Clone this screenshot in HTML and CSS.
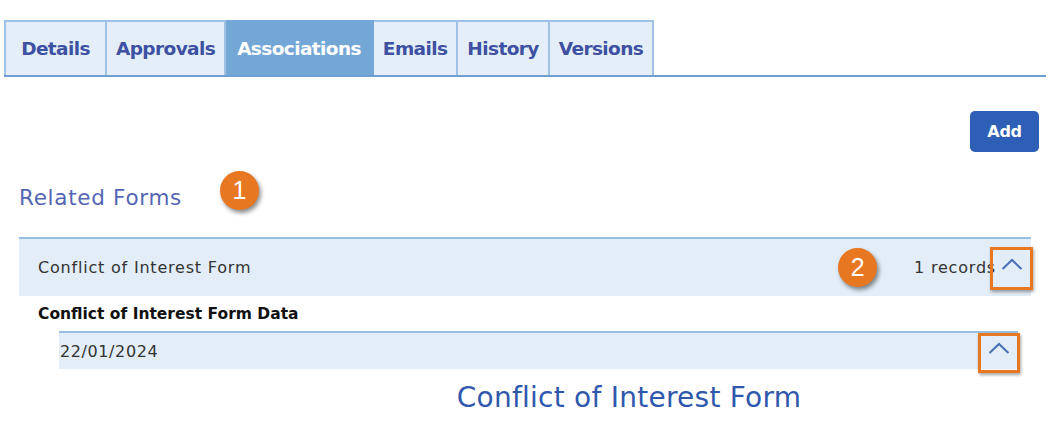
FILE: index.html
```html
<!DOCTYPE html>
<html>
<head>
<meta charset="utf-8">
<link rel="stylesheet" href="styles.css">
</head>
<body>
<div class="page">
  <div class="tabs">
    <div class="tab tab-first">Details</div>
    <div class="tab">Approvals</div>
    <div class="tab active">Associations</div>
    <div class="tab">Emails</div>
    <div class="tab">History</div>
    <div class="tab">Versions</div>
  </div>
  <div class="actions">
    <button class="btn-add">Add</button>
  </div>
  <div class="heading-row">
    <h2 class="heading">Related Forms</h2>
    <span class="badge">1</span>
  </div>
  <div class="section">
    <div class="section-head">
      <span class="section-title">Conflict of Interest Form</span>
      <span class="badge badge-2">2</span>
      <span class="records">1 records</span>
      <span class="toggle toggle-main">
        <svg width="22" height="12" viewBox="0 0 22 12"><path d="M1.5 11 L11 2 L20.5 11" fill="none" stroke="#4a6fb5" stroke-width="2"/></svg>
      </span>
    </div>
    <div class="sub-title">Conflict of Interest Form Data</div>
    <div class="sub-row">
      <span class="date">22/01/2024</span>
      <span class="toggle toggle-sub">
        <svg width="22" height="12" viewBox="0 0 22 12"><path d="M1.5 11 L11 2 L20.5 11" fill="none" stroke="#4a6fb5" stroke-width="2"/></svg>
      </span>
    </div>
    <div class="form-title">Conflict of Interest Form</div>
  </div>
</div>
</body>
</html>
```
FILE: styles.css
```css
* { box-sizing: border-box; }
body {
  margin: 0;
  background: #fff;
  font-family: "DejaVu Sans", "Open Sans", sans-serif;
}
.page {
  padding: 20px 11px 0 4px;
}
.tabs {
  display: flex;
  border-bottom: 2px solid #6e9fd2;
}
.tab {
  height: 55px;
  display: flex;
  align-items: center;
  justify-content: center;
  padding: 0 9px;
  background: #e3eef8;
  border: 2px solid #9fc2e4;
  border-bottom: none;
  color: #3d50a2;
  font-size: 18.5px;
  font-weight: 700;
  letter-spacing: -0.6px;
}
.tab-first { min-width: 103px; }
.tab + .tab { border-left: none; }
.tab.active {
  background: #74a7d6;
  border-color: #74a7d6;
  color: #fff;
  padding: 0 11px;
}
.actions {
  display: flex;
  justify-content: flex-end;
  padding: 34px 7px 0 0;
}
.btn-add {
  width: 69px;
  height: 41px;
  border: none;
  border-radius: 5px;
  background: #2c5fb5;
  color: #fff;
  font-family: inherit;
  font-size: 16px;
  font-weight: 700;
  letter-spacing: -0.3px;
}
.heading-row {
  display: flex;
  align-items: center;
  gap: 38px;
  margin: 25px 0 0 15px;
  height: 40px;
}
.heading {
  margin: 0;
  font-size: 21.5px;
  font-weight: 400;
  color: #5466b2;
  letter-spacing: 0.7px;
}
.badge {
  width: 39px;
  height: 39px;
  border-radius: 50%;
  background: #e87722;
  color: #fff;
  display: flex;
  align-items: center;
  justify-content: center;
  font-family: "Liberation Sans", sans-serif;
  font-size: 25px;
  box-shadow: 2px 3px 4px rgba(0,0,0,0.45);
  margin-top: -14px;
}
.section {
  margin: 20px 15px 0 15px;
}
.section-head {
  height: 59px;
  border-top: 2px solid #98bee2;
  background: #e2edf7;
  display: flex;
  align-items: center;
  padding-left: 19px;
}
.section-title {
  font-size: 16px;
  color: #333;
  flex: 1;
  letter-spacing: 0.8px;
}
.badge-2 {
  margin: 0 37px 0 0;
}
.records {
  font-size: 16px;
  color: #333;
  margin-right: -6px;
  letter-spacing: 0.8px;
}
.toggle {
  width: 43px;
  height: 43px;
  border: 3px solid #e87722;
  box-shadow: 1px 2px 3px rgba(0,0,0,0.35);
  display: flex;
  align-items: flex-start;
  justify-content: center;
  padding-top: 8px;
}
.toggle-main {
  margin-right: -2px;
  margin-top: 1px;
}
.sub-title {
  padding: 9px 0 0 19px;
  height: 35px;
  font-size: 15.5px;
  font-weight: 700;
  color: #111;
}
.sub-row {
  margin-left: 40px;
  margin-right: 13px;
  height: 38px;
  border-top: 2px solid #98bee2;
  background: #e2edf7;
  display: flex;
  align-items: center;
  justify-content: space-between;
  padding-left: 1px;
}
.date {
  font-size: 16px;
  color: #333;
  letter-spacing: 0.6px;
}
.toggle-sub {
  width: 42px;
  height: 40px;
  margin-right: -2px;
  margin-top: 4px;
  padding-top: 6px;
}
.form-title {
  text-align: center;
  margin: 12px 0 0 208px;
  font-size: 28px;
  font-weight: 400;
  color: #2f58ad;
  letter-spacing: 0.25px;
}
```
